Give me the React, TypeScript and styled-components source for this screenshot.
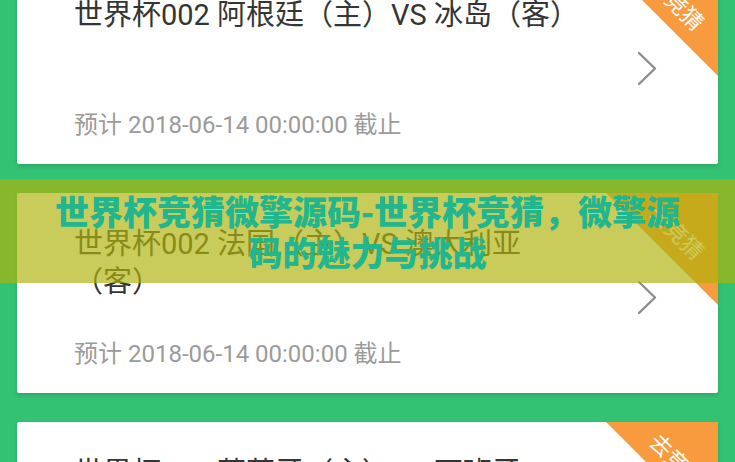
import React from "react";
import styled, { createGlobalStyle } from "styled-components";

const GlobalStyle = createGlobalStyle`
  html, body {
    margin: 0;
    padding: 0;
    background: #33c174;
  }
  body {
    font-family: Roboto, "Noto Sans CJK SC", sans-serif;
  }
`;

const Page = styled.div`
  position: relative;
  width: 735px;
  height: 462px;
  overflow: hidden;
  background: #33c174;
`;

const MatchList = styled.div`
  display: flex;
  flex-direction: column;
  gap: 29px;
  padding: 0 17px;
  margin-top: -36px;
`;

const Card = styled.div`
  position: relative;
  display: flex;
  align-items: stretch;
  height: 200px;
  box-sizing: border-box;
  padding: 32px 0 23px 57px;
  background: #ffffff;
  border-radius: 2px;
  box-shadow: 0 2px 4px rgba(0, 0, 0, 0.14);
  overflow: hidden;
`;

const CardBody = styled.div`
  display: flex;
  flex-direction: column;
  justify-content: space-between;
  width: 522px;
`;

const Title = styled.div`
  font-size: 29px;
  line-height: 38px;
  color: #353535;
`;

const Deadline = styled.div`
  font-size: 24px;
  line-height: 32px;
  color: #9b9b9b;
`;

const Arrow = styled.div`
  display: flex;
  align-items: center;
  margin-left: auto;
  margin-right: 61px;
`;

const Ribbon = styled.div`
  position: absolute;
  top: 0;
  right: 0;
  width: 112px;
  height: 112px;
  background: #f89a3e;
  clip-path: polygon(0 0, 100% 0, 100% 100%);
`;

const RibbonText = styled.span`
  position: absolute;
  left: 70px;
  top: 40px;
  transform: translate(-50%, -50%) rotate(45deg);
  font-size: 22px;
  line-height: 1;
  color: #ffffff;
  white-space: nowrap;
`;

const Banner = styled.div`
  position: absolute;
  left: 0;
  right: 0;
  top: 179px;
  height: 104px;
  display: flex;
  align-items: center;
  justify-content: center;
  padding: 0 50px;
  box-sizing: border-box;
  background: rgba(175, 178, 12, 0.68);
`;

const BannerTitle = styled.h1`
  margin: 0;
  font-family: "Noto Sans CJK SC", sans-serif;
  font-size: 34px;
  line-height: 41px;
  font-weight: 900;
  color: #21b68d;
  text-align: center;
`;

const Chevron = () => (
  <svg width="20" height="35" viewBox="0 0 20 35" fill="none">
    <polyline
      points="2,2 18,17.5 2,33"
      stroke="#8c8c8c"
      strokeWidth="2.4"
      strokeLinecap="round"
      strokeLinejoin="round"
    />
  </svg>
);

type Match = { home: string; away: string; deadline: string };

const matches: Match[] = [
  { home: "阿根廷", away: "冰岛", deadline: "2018-06-14 00:00:00" },
  { home: "法国", away: "澳大利亚", deadline: "2018-06-14 00:00:00" },
  { home: "葡萄牙", away: "西班牙", deadline: "2018-06-14 00:00:00" },
];

const MatchCard = ({ match }: { match: Match }) => (
  <Card>
    <CardBody>
      <Title>
        世界杯002 {match.home}（主）VS {match.away}（客）
      </Title>
      <Deadline>预计 {match.deadline} 截止</Deadline>
    </CardBody>
    <Arrow>
      <Chevron />
    </Arrow>
    <Ribbon>
      <RibbonText>去竞猜</RibbonText>
    </Ribbon>
  </Card>
);

export default function App() {
  return (
    <Page>
      <GlobalStyle />
      <MatchList>
        {matches.map((m) => (
          <MatchCard key={m.home} match={m} />
        ))}
      </MatchList>
      <Banner>
        <BannerTitle>世界杯竞猜微擎源码-世界杯竞猜，微擎源码的魅力与挑战</BannerTitle>
      </Banner>
    </Page>
  );
}
